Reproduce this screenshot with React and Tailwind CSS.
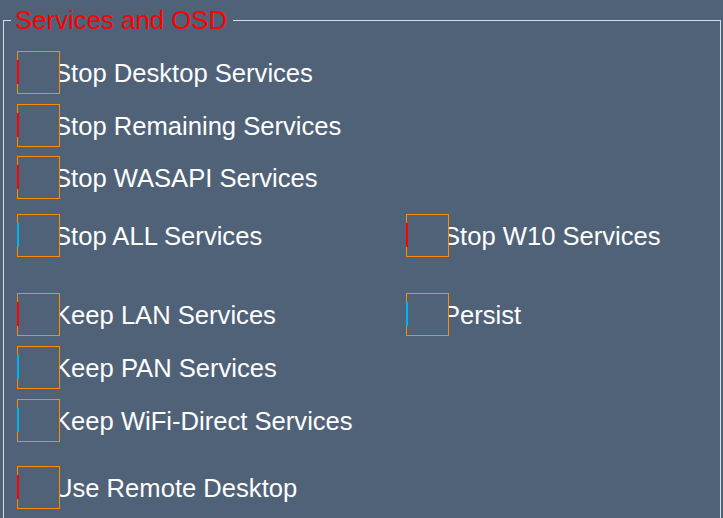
import React from "react";

const RED = "bg-[#ff0000]";
const BLUE = "bg-[#00b4f0]";

function Check({ label, bar }) {
  return (
    <div className="flex items-center">
      <div className="relative z-10 h-[43px] w-[43px] shrink-0 border border-[#ff8c00] bg-[#506278]">
        <div className={`absolute left-[-1px] top-[8px] h-[24px] w-[2px] ${bar}`} />
      </div>
      <span className="ml-[-6px] mt-[1px] whitespace-nowrap text-[25.6px] leading-[30px] text-white">
        {label}
      </span>
    </div>
  );
}

export default function App() {
  return (
    <div
      className="h-[518px] w-[723px] overflow-hidden bg-[#506278]"
      style={{ fontFamily: '"Liberation Sans", Arial, sans-serif' }}
    >
      <fieldset className="ml-[3px] mt-[5px] h-[600px] w-[718px] border border-[#d5dfe5] pl-[13px]">
        <legend className="ml-[-6px] px-[4px] pr-[6px] text-[25.8px] leading-[30px] text-[#ff0000]">
          Services and OSD
        </legend>
        <div className="flex flex-col">
          <div className="mt-[16px]">
            <Check label="Stop Desktop Services" bar={RED} />
          </div>
          <div className="mt-[10px]">
            <Check label="Stop Remaining Services" bar={RED} />
          </div>
          <div className="mt-[9px]">
            <Check label="Stop WASAPI Services" bar={RED} />
          </div>
          <div className="mt-[15px] grid grid-cols-[389px_1fr]">
            <Check label="Stop ALL Services" bar={BLUE} />
            <Check label="Stop W10 Services" bar={RED} />
          </div>
          <div className="mt-[36px] grid grid-cols-[389px_1fr]">
            <Check label="Keep LAN Services" bar={RED} />
            <Check label="Persist" bar={BLUE} />
          </div>
          <div className="mt-[10px]">
            <Check label="Keep PAN Services" bar={BLUE} />
          </div>
          <div className="mt-[10px]">
            <Check label="Keep WiFi-Direct Services" bar={BLUE} />
          </div>
          <div className="mt-[24px]">
            <Check label="Use Remote Desktop" bar={RED} />
          </div>
        </div>
      </fieldset>
    </div>
  );
}
